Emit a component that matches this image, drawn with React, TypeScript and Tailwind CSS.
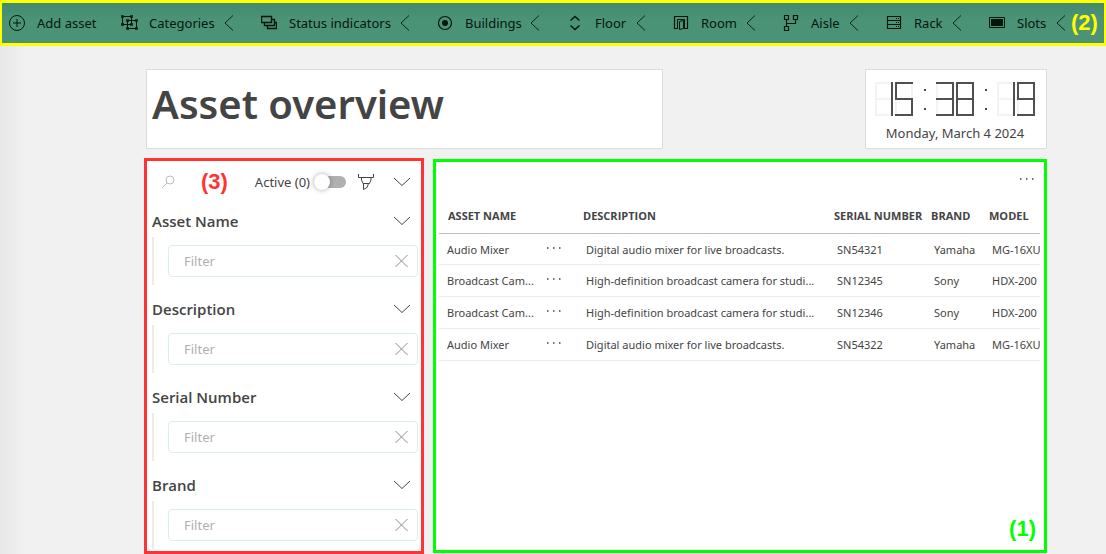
import type { ReactNode } from "react";

function Icon({ w = 16, h = 16, className = "", children }: { w?: number; h?: number; className?: string; children: ReactNode }) {
  return (
    <svg
      width={w}
      height={h}
      viewBox={`0 0 ${w} ${h}`}
      fill="none"
      stroke="currentColor"
      strokeWidth={1}
      aria-hidden="true"
      className={`shrink-0 ${className}`}
    >
      {children}
    </svg>
  );
}

const AddIcon = () => (
  <Icon>
    <circle cx="8" cy="8" r="7.5" />
    <path d="M8 4v8M4 8h8" />
  </Icon>
);

const GroupIcon = () => (
  <Icon className="overflow-visible">
    <path d="M1.500 1.500h9v8h-9zM6.500 5.500h9v8h-9z" />
    <path
      d="M0 0h3v3H0zM9 0h3v3H9zM0 8h3v3H0zM9 8h3v3H9zM5 4h3v3H5zM14 4h3v3h-3zM5 12h3v3H5zM14 12h3v3h-3z"
      fill="currentColor"
      fillOpacity="0.700"
      stroke="none"
    />
  </Icon>
);

const StackIcon = () => (
  <Icon>
    <path d="M.5 1.500h10v6H.5z" strokeWidth="1.400" />
    <path d="M11 4.500h2.500v6h-10V8" strokeWidth="1.400" />
    <path d="M14 7.500h1.500v6h-9V11" strokeWidth="1.400" />
  </Icon>
);

const TargetIcon = () => (
  <Icon>
    <circle cx="8" cy="8" r="6.500" strokeWidth="1.200" />
    <circle cx="8" cy="8" r="3" fill="currentColor" stroke="none" />
  </Icon>
);

const SortIcon = () => (
  <Icon>
    <path d="M3.500 5.500 8 1.500l4.500 4M3.500 10.500 8 14.500l4.500-4" strokeWidth="1.500" />
  </Icon>
);

const RoomIcon = () => (
  <Icon>
    <path d="M4 13.500H1.500v-12h13v12H12" strokeWidth="1.200" />
    <path d="M4.500 14V4.500h7V14M6.500 14.500v-8l4-1v8z" />
  </Icon>
);

const TreeIcon = () => (
  <Icon>
    <path d="M1.500.5h4v4h-4zM10.500.5h4v4h-4zM1.500 11.500h4v4h-4z" strokeWidth="1.200" />
    <path d="M3.500 5v6M3.500 8.500h9V5" strokeWidth="1.200" />
  </Icon>
);

const RackIcon = () => (
  <Icon>
    <path d="M1.500 1.500h13v12h-13zM1.500 5.500h13M1.500 9.500h13" strokeWidth="1.200" />
    <path d="M10 3.500h1M12 3.500h1M10 7.500h1M12 7.500h1M10 11.500h1M12 11.500h1" />
  </Icon>
);

const SlotIcon = () => (
  <Icon>
    <path d="M0.500 2.500h15v10h-15z" />
    <path d="M2 4h12v7H2z" fill="currentColor" stroke="none" />
  </Icon>
);

const ChevronLeft = () => (
  <Icon w={10}>
    <path d="M9 .5 1 8l8 7.500" strokeWidth="0.900" />
  </Icon>
);

const ChevronDown = () => (
  <Icon w={18} h={10}>
    <path d="M1 1l8 7.500L17 1" />
  </Icon>
);

const items = [
  { label: "Add asset", icon: <AddIcon />, width: "w-[72px]", menu: false },
  { label: "Categories", icon: <GroupIcon />, width: "w-[75px]", menu: true },
  { label: "Status indicators", icon: <StackIcon />, width: "w-[111px]", menu: true },
  { label: "Buildings", icon: <TargetIcon />, width: "w-[65px]", menu: true },
  { label: "Floor", icon: <SortIcon />, width: "w-[41px]", menu: true },
  { label: "Room", icon: <RoomIcon />, width: "w-[45px]", menu: true },
  { label: "Aisle", icon: <TreeIcon />, width: "w-[38px]", menu: true },
  { label: "Rack", icon: <RackIcon />, width: "w-[38px]", menu: true },
  { label: "Slots", icon: <SlotIcon />, width: "w-[39px]", menu: true },
];

function Toolbar() {
  return (
    <nav className="flex h-[46px] items-center border-x-2 border-y-[3px] border-[#ffff00] bg-linear-to-b from-[#438b6f] to-[#4b9377] to-40% pl-[7px] text-[#06160f]">
      <div className="flex items-center">
        {items.map((item) => (
          <button
            key={item.label}
            type="button"
            className={`flex items-center text-left text-[13px] leading-5 ${item.menu ? "pr-[27px]" : "pr-[12px]"}`}
          >
            {item.icon}
            <span className={`ml-3 whitespace-nowrap ${item.width}`}>{item.label}</span>
            {item.menu && <ChevronLeft />}
          </button>
        ))}
      </div>
      <span className="-ml-[22px] font-['Liberation_Sans',sans-serif] text-[22px] leading-6 font-bold text-[#ffff00]">(2)</span>
    </nav>
  );
}

/* Segments: top, upper right, lower right, bottom, lower left, upper left, middle */
const segments: Record<string, string> = {
  "1": "0110000",
  "3": "1111001",
  "5": "1011011",
  "8": "1111111",
  "9": "1111011",
};

function Digit({ value }: { value: string }) {
  const s = segments[value];
  const color = (i: number) => (s[i] === "1" ? "#505050" : "#f3f3f3");
  const lines = [
    { i: 0, d: "M0 1h18" },
    { i: 6, d: "M0 17h18" },
    { i: 3, d: "M0 33h18" },
    { i: 5, d: "M1 0v17" },
    { i: 4, d: "M1 17v17" },
    { i: 1, d: "M17 0v17" },
    { i: 2, d: "M17 17v17" },
  ].sort((a, b) => Number(s[a.i]) - Number(s[b.i]));
  return (
    <svg width="18" height="34" viewBox="0 0 18 34" aria-hidden="true">
      {lines.map((l) => (
        <path key={l.i} d={l.d} stroke={color(l.i)} strokeWidth="2" />
      ))}
    </svg>
  );
}

function Colon() {
  return (
    <span className="flex w-[23px] flex-col items-center gap-[17px]">
      <span className="size-[2px] bg-[#484848]" />
      <span className="size-[2px] bg-[#484848]" />
    </span>
  );
}

function Clock() {
  return (
    <section className="flex w-[182px] flex-col items-center border border-[#dcdcdc] bg-white pt-3 pr-[2px]">
      <time dateTime="15:38:19" aria-label="15:38:19" className="flex items-center">
        {["15", "38", "19"].map((pair, i) => (
          <span key={pair} className="flex items-center">
            {i > 0 && <Colon />}
            <span className="flex gap-[2px]">
              <Digit value={pair[0]} />
              <Digit value={pair[1]} />
            </span>
          </span>
        ))}
      </time>
      <p className="mt-[7px] text-[13px] leading-5">Monday, March 4 2024</p>
    </section>
  );
}

function FilterSection({ title }: { title: string }) {
  const id = `filter-${title.toLowerCase().replace(" ", "-")}`;
  return (
    <div className="mb-2 last:mb-0">
      <div className="flex h-8 items-center justify-between pr-[7px]">
        <label htmlFor={id} className="font-['Open_Sans',sans-serif] text-[15px] leading-5 font-semibold">
          {title}
        </label>
        <button type="button" aria-label={`Collapse ${title}`}>
          <ChevronDown />
        </button>
      </div>
      <div className="border-l-2 border-[#ebebeb] py-2 pl-[14px]">
        <div className="flex h-8 items-center rounded border border-[#d9efe8] pr-[9px] pl-[15px]">
          <input
            id={id}
            type="text"
            placeholder="Filter"
            className="min-w-0 flex-1 text-[13px] leading-5 outline-none placeholder:text-[#b0b0b0]"
          />
          <button type="button" aria-label={`Clear ${title}`} className="text-[#8a8a8a]">
            <Icon w={14} h={14}>
              <path d="M1.500 1l12 12M13.500 1l-12 12" />
            </Icon>
          </button>
        </div>
      </div>
    </div>
  );
}

function Filters() {
  return (
    <aside className="w-[280px] shrink-0 border-3 border-[#ff3333] bg-white pr-[3px] pb-[2px] pl-[5px]">
      <div className="flex h-11 items-center pr-[7px] pb-[2px]">
        <button type="button" aria-label="Search" className="ml-[9px] text-[#bdbdbd]">
          <Icon w={14} h={14}>
            <circle cx="9" cy="5" r="4" />
            <path d="M6 8l-5 5" />
          </Icon>
        </button>
        <span className="ml-[26px] font-['Liberation_Sans',sans-serif] text-[22px] leading-6 font-bold text-[#ff3333]">(3)</span>
        <label className="ml-auto flex items-center gap-1 text-[13px] leading-5">
          Active (0)
          <input type="checkbox" role="switch" className="peer sr-only" />
          <span className="flex h-3 w-8 items-center rounded-full bg-[#b0b0b0]">
            <span className="size-4 shrink-0 rounded-full bg-white shadow-[0_0_5px_rgba(0,0,0,0.35)]" />
          </span>
        </label>
        <button type="button" aria-label="Clear filters" className="ml-3">
          <Icon>
            <path d="M.5 0v3.500h15V0M3.500 3.500V6L5 9.500h6.500L13 6V3.500M5.500 9.500v6l3.500-2 1.500-4" />
          </Icon>
        </button>
        <button type="button" aria-label="Collapse filters" className="ml-[19px]">
          <ChevronDown />
        </button>
      </div>
      {["Asset Name", "Description", "Serial Number", "Brand"].map((title) => (
        <FilterSection key={title} title={title} />
      ))}
    </aside>
  );
}

const mixer = "Digital audio mixer for live broadcasts.";
const camera = "High-definition broadcast camera for studi...";
const rows = [
  ["Audio Mixer", mixer, "SN54321", "Yamaha", "MG-16XU"],
  ["Broadcast Cam...", camera, "SN12345", "Sony", "HDX-200"],
  ["Broadcast Cam...", camera, "SN12346", "Sony", "HDX-200"],
  ["Audio Mixer", mixer, "SN54322", "Yamaha", "MG-16XU"],
];

const Dots = () => (
  <Icon w={16} h={4}>
    <path d="M1 2h1.500M7 2h1.500M13 2h1.500" strokeWidth="1.500" />
  </Icon>
);

function AssetTable() {
  return (
    <section className="relative mt-px mb-px min-w-0 flex-1 border-3 border-[#00ff00] bg-white pr-1 pl-[3px]">
      <div className="flex h-[33px] items-center justify-end pr-[5px]">
        <button type="button" aria-label="Table options">
          <Dots />
        </button>
      </div>
      <div className="overflow-hidden">
        <table className="w-full min-w-[632px] table-fixed border-collapse text-left text-[11px] leading-4">
          <colgroup>
            <col className="w-[136px]" />
            <col className="w-[251px]" />
            <col className="w-[97px]" />
            <col className="w-[58px]" />
            <col />
          </colgroup>
          <thead>
            <tr className="h-[38px] border-b border-[#bdbdbd]">
              {["ASSET NAME", "DESCRIPTION", "SERIAL NUMBER", "BRAND", "MODEL"].map((h) => (
                <th key={h} scope="col" className="pt-[5px] pl-2 font-['Open_Sans',sans-serif] font-bold whitespace-nowrap first:pl-[9px]">
                  {h}
                </th>
              ))}
            </tr>
          </thead>
          <tbody>
            {rows.map(([name, ...rest]) => (
              <tr key={rest[1]} className="h-8 border-b border-[#ebebeb] first:h-[31px]">
                <td className="pt-[2px] pl-2">
                  <div className="flex items-center">
                    <span className="w-[99px] whitespace-nowrap">{name}</span>
                    <button type="button" aria-label={`Actions for ${rest[1]}`} className="pb-1">
                      <Dots />
                    </button>
                  </div>
                </td>
                {rest.map((cell) => (
                  <td key={cell} className="pt-[2px] pl-[11px] whitespace-nowrap">
                    {cell}
                  </td>
                ))}
              </tr>
            ))}
          </tbody>
        </table>
      </div>
      <span className="absolute right-2 bottom-[9px] font-['Liberation_Sans',sans-serif] text-[22px] leading-6 font-bold text-[#00ff00]">
        (1)
      </span>
    </section>
  );
}

export default function App() {
  return (
    <div className="min-h-screen overflow-x-hidden bg-[#f1f1f1] font-['Noto_Sans','Open_Sans',sans-serif] text-[#444444]">
      <Toolbar />
      <main className="bg-linear-to-r from-[#e8e8e8] to-[#f1f1f1] to-[26px] pt-[23px] pr-[59px] pl-36">
        <div className="flex h-20 gap-[202px] pl-[2px]">
          <header className="flex-1 border border-[#dcdcdc] bg-white pt-2 pl-[5px]">
            <h1 className="text-[40px] leading-[52px] font-semibold whitespace-nowrap">Asset overview</h1>
          </header>
          <Clock />
        </div>
        <div className="mt-[9px] flex gap-[9px]">
          <Filters />
          <AssetTable />
        </div>
      </main>
    </div>
  );
}
